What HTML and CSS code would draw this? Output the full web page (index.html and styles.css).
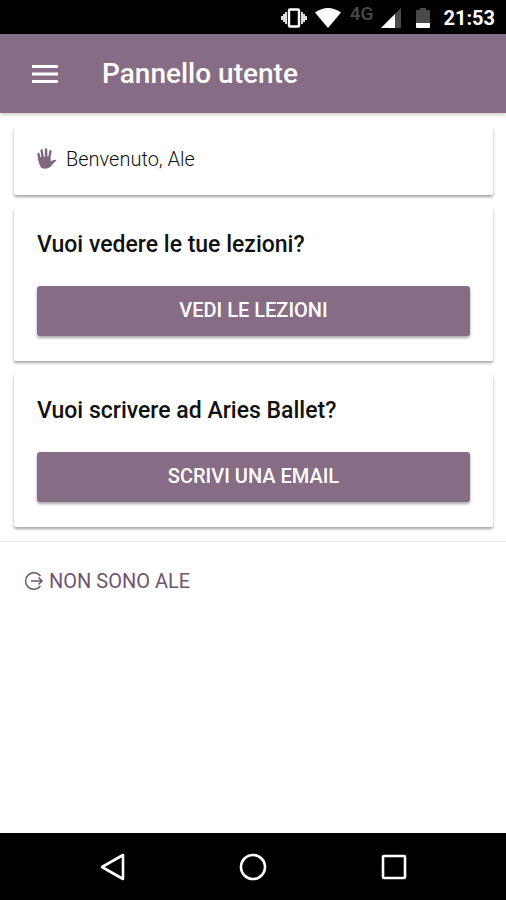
FILE: index.html
```html
<!DOCTYPE html>
<html lang="it">
<head>
<meta charset="utf-8">
<meta name="viewport" content="width=device-width, initial-scale=1">
<title>Pannello utente</title>
<link rel="stylesheet" href="styles.css">
</head>
<body>
<div class="status-bar">
  <svg width="26" height="20" viewBox="0 0 26 20" aria-hidden="true">
    <path d="M0 8h2V6h2V4h2v12H4v-2H2v-2H0zM26 8h-2V6h-2V4h-2v12h2v-2h2v-2h2z" fill="#ddd"/>
    <rect x="8" y="1.5" width="10" height="17" rx="1" fill="none" stroke="#fff" stroke-width="2.4"/>
  </svg>
  <svg class="wifi" width="26" height="20" viewBox="0 0 26 20" aria-hidden="true">
    <path d="M0 4.500Q13-4.500 26 4.500L13 20z" fill="#fff"/>
  </svg>
  <span class="network">4G</span>
  <svg class="signal" width="20" height="20" viewBox="0 0 20 20" aria-hidden="true">
    <path d="M20 0v20H0z" fill="#4a4a4a"/>
    <path d="M14 6v14H0z" fill="#fff"/>
  </svg>
  <svg class="battery" width="14" height="20" viewBox="0 0 14 20" aria-hidden="true">
    <path d="M4 0h6v2h3q1 0 1 1v12H0V3q0-1 1-1h3z" fill="#4a4a4a"/>
    <path d="M0 15h14v4q0 1-1 1H1q-1 0-1-1z" fill="#fff"/>
  </svg>
  <time class="clock">21:53</time>
</div>
<header class="toolbar">
  <button class="icon-button" type="button" aria-label="Menu">
    <svg width="26" height="18" viewBox="0 0 26 18"><path d="M0 1.500h26M0 9h26M0 16.500h26" stroke="#fff" stroke-width="2.800"/></svg>
  </button>
  <h1 class="title">Pannello utente</h1>
</header>
<main class="content">
  <section class="card welcome">
    <svg width="20" height="22" viewBox="0 0 20 22" aria-hidden="true">
      <path d="M2.500 12L1.500 6M6 11L4.600 2.500M9.300 11L9 1.400M12 11L13.500 3.200" fill="none" stroke="#816680" stroke-width="2.400" stroke-linecap="round"/>
      <path d="M1.300 9L13.200 8.500L14 13.500C15 12.500 16.500 11.500 19 11.700Q20 12.100 19 13C16 14.800 15 17.500 13 19.300Q9 21.800 4.500 20Q1.600 17 1.300 9z" fill="#816680"/>
    </svg>
    <span>Benvenuto, Ale</span>
  </section>
  <section class="card">
    <h2 class="question">Vuoi vedere le tue lezioni?</h2>
    <button class="action" type="button">VEDI LE LEZIONI</button>
  </section>
  <section class="card">
    <h2 class="question">Vuoi scrivere ad Aries Ballet?</h2>
    <button class="action" type="button">SCRIVI UNA EMAIL</button>
  </section>
</main>
<footer class="account">
  <button class="logout" type="button">
    <svg width="20" height="20" viewBox="0 0 20 20" fill="none" stroke="#705570" stroke-width="1.500" aria-hidden="true">
      <path d="M16.500 5A8.300 8.300 0 1 0 16.500 15M7 10h11M14.500 6.500L18 10l-3.500 3.500"/>
    </svg>
    <span>NON SONO ALE</span>
  </button>
</footer>
<nav class="system-nav" aria-label="Sistema">
  <button class="icon-button" type="button" aria-label="Indietro">
    <svg width="28" height="28" viewBox="0 0 28 28"><path d="M25 2v24L4 14z"/></svg>
  </button>
  <button class="icon-button" type="button" aria-label="Home">
    <svg width="28" height="28" viewBox="0 0 28 28"><circle cx="14" cy="14" r="12"/></svg>
  </button>
  <button class="icon-button" type="button" aria-label="Recenti">
    <svg width="28" height="28" viewBox="0 0 28 28"><rect x="3" y="3" width="22" height="22" rx="1"/></svg>
  </button>
</nav>
</body>
</html>
```
FILE: styles.css
```css
* {
  box-sizing: border-box;
}

body {
  display: flex;
  flex-direction: column;
  min-height: 100vh;
  margin: 0;
  background: #fff;
  color: #111;
  font-family: Roboto, sans-serif;
}

button {
  border: 0;
  margin: 0;
  font-family: inherit;
  cursor: pointer;
}

svg {
  display: block;
  flex: none;
}

.status-bar {
  display: flex;
  align-items: center;
  justify-content: flex-end;
  height: 34px;
  padding: 2px 11px 0 0;
  background: #000;
  color: #fff;
}

.wifi {
  margin-left: 8px;
}

.network {
  margin-left: 9px;
  padding-bottom: 8px;
  color: #4a4a4a;
  font-size: 19px;
  font-weight: 500;
  line-height: 20px;
}

.signal {
  margin-left: 8px;
}

.battery {
  margin: 0 13px 0 15px;
}

.clock {
  font-size: 20px;
  font-weight: 700;
}

.toolbar {
  display: flex;
  align-items: center;
  gap: 44px;
  height: 79px;
  padding: 0 32px;
  background: #866c84;
  color: #fff;
  box-shadow: 0 2px 4px rgba(0, 0, 0, 0.2);
}

.icon-button {
  padding: 0;
  background: none;
}

.title {
  margin: 0;
  font-size: 28px;
  font-weight: 500;
  line-height: 32px;
}

.content {
  display: flex;
  flex-direction: column;
  gap: 13px;
  padding: 14px 13px 14px 14px;
  border-bottom: 1px solid #e4e4e4;
}

.card {
  padding: 23px 23px 25px;
  border-radius: 2px;
  background: #fff;
  box-shadow: 0 2px 3px rgba(0, 0, 0, 0.36);
}

.welcome {
  display: flex;
  align-items: center;
  gap: 9px;
  padding: 20px 23px 24px;
  font-size: 20px;
  font-weight: 300;
  line-height: 24px;
}

.question {
  margin: 0 0 27px;
  font-size: 23px;
  font-weight: 500;
  line-height: 28px;
}

.action {
  display: block;
  width: 100%;
  height: 50px;
  padding: 0 0 2px;
  border-radius: 3px;
  background: #866c84;
  box-shadow: 0 2px 3px rgba(0, 0, 0, 0.35);
  color: #fff;
  font-size: 20px;
  font-weight: 500;
}

.account {
  flex: 1;
  padding: 27px 24px;
}

.logout {
  display: flex;
  align-items: center;
  gap: 5px;
  padding: 0;
  background: none;
  color: #705570;
  font-size: 20px;
  line-height: 24px;
}

.system-nav {
  display: flex;
  align-items: center;
  justify-content: space-between;
  height: 67px;
  padding: 0 98px;
  background: #000;
}

.system-nav svg {
  fill: none;
  stroke: #fff;
  stroke-width: 2.6;
  stroke-linejoin: round;
}
```
